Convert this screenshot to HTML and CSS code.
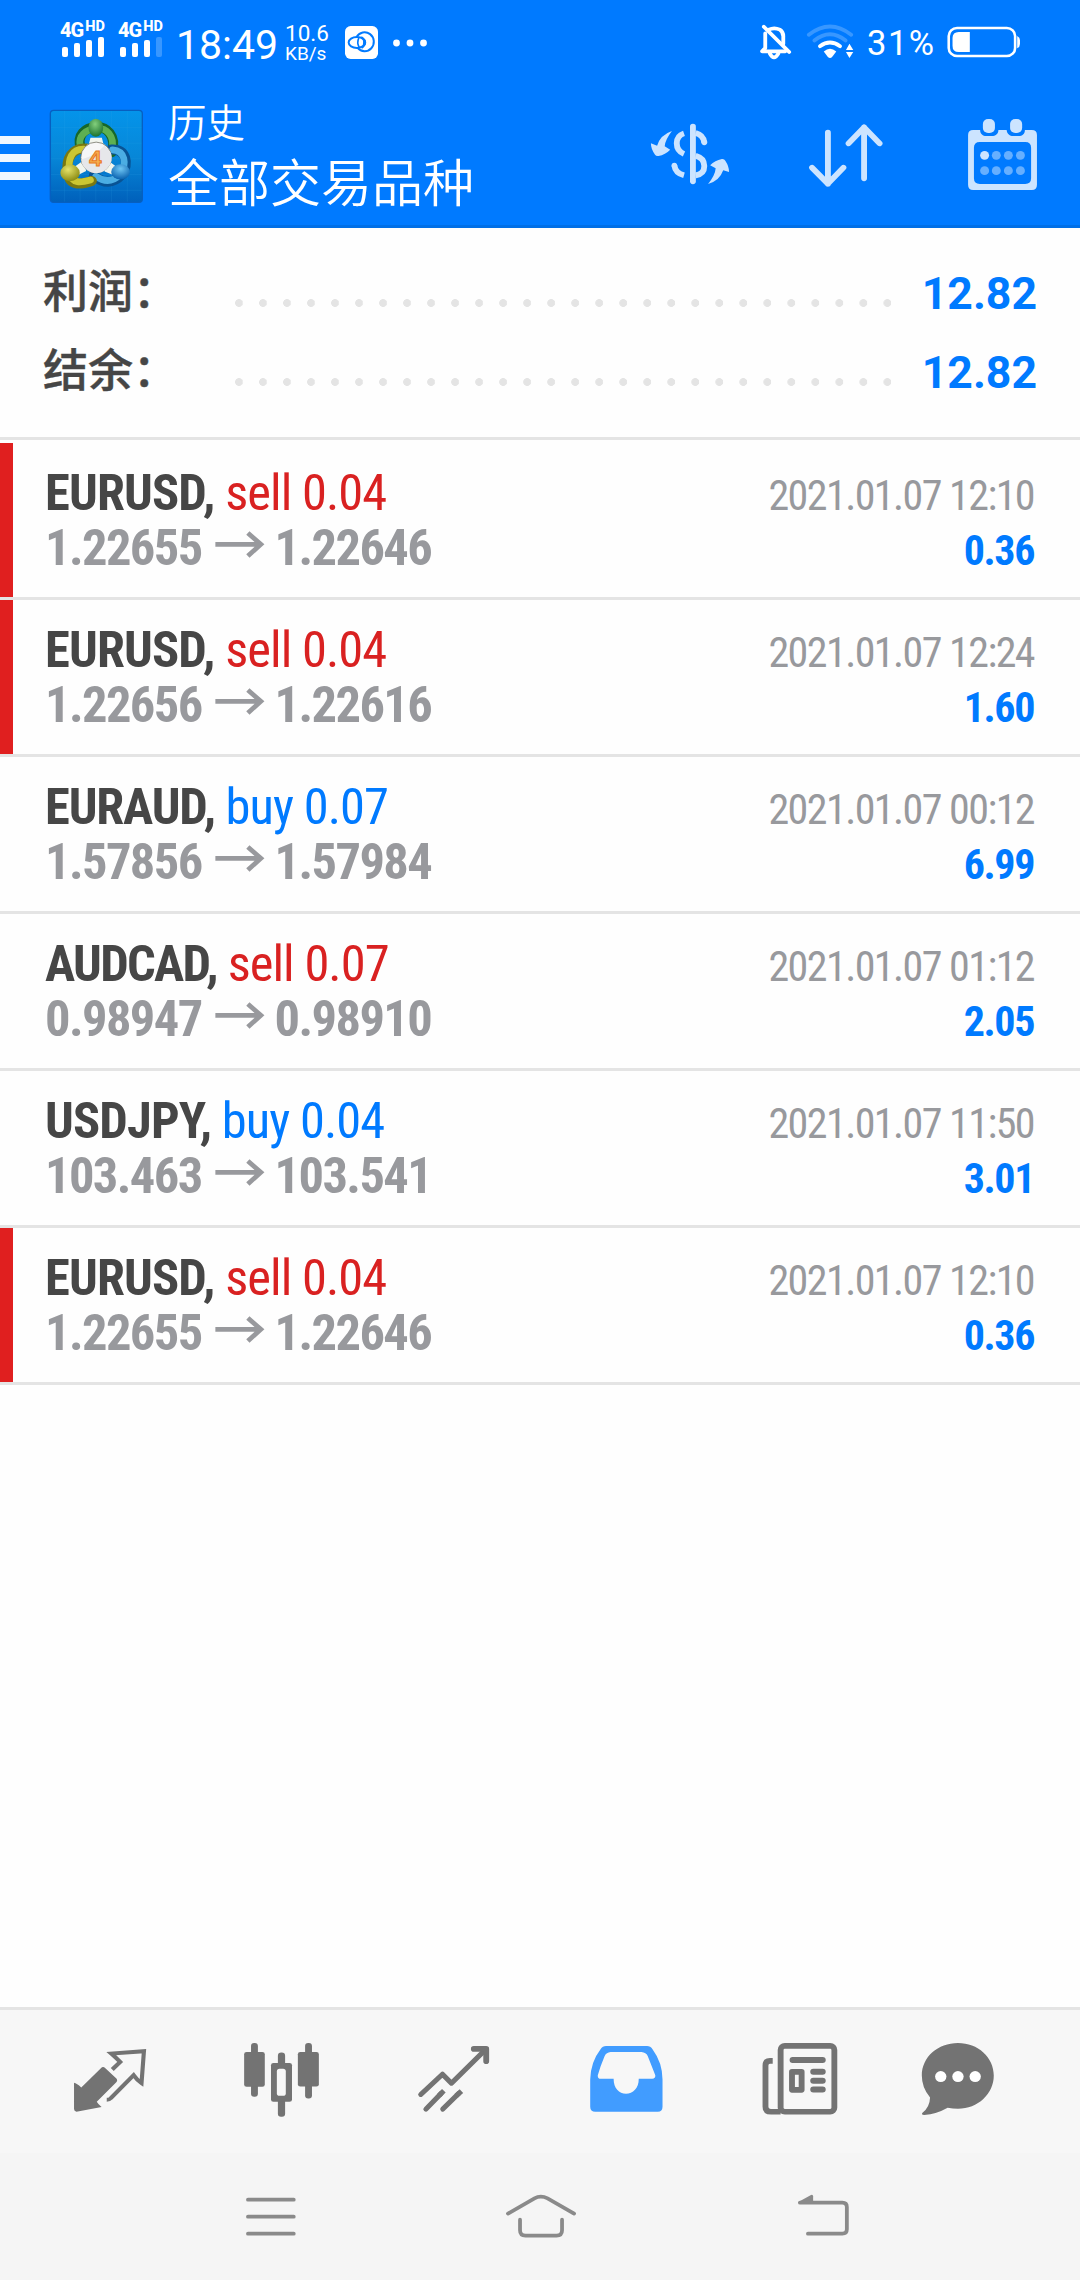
FILE: index.html
```html
<!DOCTYPE html>
<html lang="zh-CN">
<head>
<meta charset="utf-8">
<title>历史</title>
<link rel="stylesheet" href="styles.css">
</head>
<body>
<header class="top">
  <div class="status">
    <div class="signal">
      <div class="net">4G<sup>HD</sup></div>
      <div class="bars"><i class="b1"></i><i class="b2"></i><i class="b3"></i><i class="b4"></i></div>
    </div>
    <div class="signal">
      <div class="net">4G<sup>HD</sup></div>
      <div class="bars"><i class="b1"></i><i class="b2"></i><i class="b3"></i><i class="b4 off"></i></div>
    </div>
    <div class="clock">18:49</div>
    <div class="speed"><span>10.6</span><span class="unit">KB/s</span></div>
    <svg class="app" viewBox="15 33 100 98" preserveAspectRatio="none">
      <rect x="15" y="33" width="100" height="98" rx="17" fill="#fff"/>
      <g fill="none" stroke="#007aff" stroke-width="6">
        <path d="M50 66A28 28 0 1 1 53 98"/>
        <ellipse cx="51" cy="82" rx="25" ry="16"/>
        <path d="M57 68Q50 82 58 96" stroke-width="5"/>
      </g>
      <path d="M65 65Q90 82 66 99Q78 82 65 65Z" fill="#007aff" stroke="#007aff" stroke-width="3"/>
    </svg>
    <svg class="more" viewBox="0 0 36 8"><g fill="#fff"><circle cx="4.500" cy="4" r="3.400"/><circle cx="18" cy="4" r="3.400"/><circle cx="31.500" cy="4" r="3.400"/></g></svg>
    <svg class="bell" viewBox="636 70 98 114" preserveAspectRatio="none">
      <g fill="none" stroke="#fff" stroke-width="11" stroke-linecap="round" stroke-linejoin="round">
        <path d="M654 101V145L645 155H712M664 90Q680 82 696 90Q707 97 706 113V133"/>
        <path d="M667 161Q679 185 692 161"/>
        <path d="M650 81L723 157"/>
      </g>
    </svg>
    <svg class="wifi" viewBox="770 70 144 110" preserveAspectRatio="none">
      <g fill="none" stroke="#fff" stroke-width="11" stroke-linecap="round">
        <path d="M781 105Q842 56 903 105" opacity=".22"/>
        <path d="M797 122Q842 85 887 122" opacity=".22"/>
        <path d="M813 139Q842 117 871 139"/>
      </g>
      <path d="M824 155Q842 138 860 155L848 171Q842 177 836 171Z" fill="#fff"/>
      <path d="M898 132L909 150H888ZM898 174L909 156H888Z" fill="#fff"/>
    </svg>
    <div class="percent">31%</div>
    <svg class="battery" viewBox="1183 78 214 96" preserveAspectRatio="none">
      <rect x="1188" y="84" width="192" height="84" rx="24" fill="none" stroke="#fff" stroke-width="7.500"/>
      <path d="M1249 96V156H1217Q1199 156 1199 138V114Q1199 96 1217 96Z" fill="#fff"/>
      <path d="M1386 108Q1394 112 1394 120V132Q1394 141 1386 145Z" fill="#fff"/>
    </svg>
  </div>
  <div class="toolbar">
    <div class="burger"><i></i><i></i><i></i></div>
    <svg class="logo" viewBox="26 41 284 284">
      <defs>
        <linearGradient id="sky" x1="0" y1="0" x2="0" y2="1"><stop offset="0" stop-color="#0494ea"/><stop offset=".5" stop-color="#0787d8"/><stop offset="1" stop-color="#0060bb"/></linearGradient>
        <radialGradient id="green" cx=".45" cy=".3" r=".7"><stop offset="0" stop-color="#83cf7c"/><stop offset="1" stop-color="#1c7230"/></radialGradient>
        <radialGradient id="gold" cx=".4" cy=".3" r=".75"><stop offset="0" stop-color="#e6e36a"/><stop offset="1" stop-color="#86860e"/></radialGradient>
        <radialGradient id="blue" cx=".5" cy=".3" r=".7"><stop offset="0" stop-color="#6fc6f4"/><stop offset="1" stop-color="#0860ae"/></radialGradient>
      </defs>
      <rect x="30" y="45" width="275" height="275" rx="10" fill="url(#sky)" stroke="#075fc0" stroke-width="4"/>
      <path d="M72 47V318M119 47V318M166 47V318M213 47V318M260 47V318M32 96H303M32 143H303M32 190H303M32 237H303M32 284H303" stroke="#3aabea" stroke-opacity=".2" stroke-width="2"/>
      <g fill="none" stroke-linecap="round">
        <path d="M121 158C108 118 135 97 166 95S229 120 214 170" stroke="#17672b" stroke-width="30"/>
        <path d="M119 150C113 122 135 103 166 99S224 122 214 162" stroke="#5db052" stroke-width="20"/>
        <path d="M212 162C258 160 266 204 243 238Q205 278 160 240" stroke="#095394" stroke-width="30"/>
        <path d="M216 163C254 166 260 204 239 237Q205 270 166 242" stroke="#4bade3" stroke-width="20"/>
        <path d="M138 159C94 156 76 190 82 232S125 266 154 256" stroke="#797812" stroke-width="30"/>
        <path d="M130 161C94 160 82 190 87 229S125 260 150 253" stroke="#cbc632" stroke-width="20"/>
      </g>
      <path d="M150 127H184L190 150H144ZM96 218L130 194L137 226L110 240ZM202 194L236 220L222 240L192 228Z" fill="#f1f5ee"/>
      <ellipse cx="166" cy="97" rx="22" ry="27" fill="url(#green)"/>
      <ellipse cx="89" cy="232" rx="29" ry="25" fill="url(#gold)"/>
      <ellipse cx="240" cy="229" rx="28" ry="23" fill="url(#blue)"/>
      <circle cx="167" cy="186" r="46" fill="#f7f7f7" stroke="#5c5c4d" stroke-width="2"/>
      <path d="M122 192Q165 181 192 150L211 172A46 46 0 0 1 150 229Q125 218 122 192Z" fill="#e6e7ea"/>
      <text class="four" x="165" y="212" text-anchor="middle">4</text>
    </svg>
    <div class="titles"><div class="sub">历史</div><div class="main">全部交易品种</div></div>
    <svg class="act" viewBox="209 264 453 411" preserveAspectRatio="none">
      <g fill="none" stroke="#cce4ff" stroke-width="17">
        <path d="M444 380V544" stroke-linecap="round"/>
        <path d="M418 400Q397 407 397 430T418 462M390 496Q393 519 418 526"/>
        <path d="M452 399Q474 405 477 427M452 467Q477 474 477 498T452 526"/>
      </g>
      <path d="M383 393Q363 420 362 439L378 449Q364 464 344 468Q337 469 334 464Q322 448 322 430L340 437Q349 405 383 393Z" fill="#cce4ff"/>
      <path d="M488 552Q509 525 510 505L494 496Q508 481 528 477Q535 476 538 482Q549 499 549 516L532 511Q521 543 488 552Z" fill="#cce4ff"/>
      <circle cx="477" cy="427" r="8.500" fill="#cce4ff"/><circle cx="390" cy="496" r="8" fill="#cce4ff"/>
    </svg>
    <svg class="act" viewBox="662 264 453 411" preserveAspectRatio="none">
      <g fill="none" stroke="#cce4ff" stroke-width="17" stroke-linecap="round" stroke-linejoin="round">
        <path d="M836 398V551M790 503L836 551L881 503"/>
        <path d="M941 535V382M896 430L941 382L986 430"/>
      </g>
    </svg>
    <svg class="act" viewBox="1115 264 453 411" preserveAspectRatio="none">
      <path fill="#cce4ff" fill-rule="evenodd" d="M1258 390H1278C1278 403 1287 408 1295 408H1312C1322 408 1331 402 1331 390H1355C1356 403 1365 408 1373 408H1390C1400 408 1408 402 1408 390H1428Q1443 390 1443 405V554Q1443 570 1428 570H1258Q1243 570 1243 554V405Q1243 390 1258 390ZM1277 426Q1260 426 1260 443V535Q1260 552 1277 552H1409Q1426 552 1426 535V443Q1426 426 1409 426Z"/>
      <rect x="1286" y="357" width="35" height="42" rx="15" fill="#cce4ff"/><rect x="1365" y="357" width="35" height="42" rx="15" fill="#cce4ff"/>
      <circle cx="1291" cy="466" r="13" fill="#cce4ff"/>
      <g fill="#66afff"><circle cx="1325" cy="466" r="13"/><circle cx="1360" cy="466" r="13"/><circle cx="1395" cy="466" r="13"/><circle cx="1291" cy="512" r="13"/><circle cx="1325" cy="512" r="13"/><circle cx="1360" cy="512" r="13"/><circle cx="1395" cy="512" r="13"/></g>
    </svg>
  </div>
</header>

<section class="summary">
  <div class="sumrow"><span class="label">利润：</span><span class="dots"></span><span class="total">12.82</span></div>
  <div class="sumrow"><span class="label">结余：</span><span class="dots"></span><span class="total">12.82</span></div>
</section>

<svg class="defs" width="0" height="0"><symbol id="arrow" viewBox="620 900 152 87" preserveAspectRatio="none"><path d="M624 943H756M719 909L757 943L719 978" fill="none" stroke="#98999d" stroke-width="14"/></symbol></svg>

<main class="deals">
  <article class="deal marked">
    <div class="line"><span><b class="sym">EURUSD,</b> <span class="sell">sell 0.04</span></span><span class="date">2021.01.07 12:10</span></div>
    <div class="line"><span class="price">1.22655<svg class="arrow"><use href="#arrow"/></svg>1.22646</span><b class="profit">0.36</b></div>
  </article>
  <article class="deal marked">
    <div class="line"><span><b class="sym">EURUSD,</b> <span class="sell">sell 0.04</span></span><span class="date">2021.01.07 12:24</span></div>
    <div class="line"><span class="price">1.22656<svg class="arrow"><use href="#arrow"/></svg>1.22616</span><b class="profit">1.60</b></div>
  </article>
  <article class="deal">
    <div class="line"><span><b class="sym tight">EURAUD,</b> <span class="buy">buy 0.07</span></span><span class="date">2021.01.07 00:12</span></div>
    <div class="line"><span class="price">1.57856<svg class="arrow"><use href="#arrow"/></svg>1.57984</span><b class="profit">6.99</b></div>
  </article>
  <article class="deal">
    <div class="line"><span><b class="sym tighter">AUDCAD,</b> <span class="sell">sell 0.07</span></span><span class="date">2021.01.07 01:12</span></div>
    <div class="line"><span class="price">0.98947<svg class="arrow"><use href="#arrow"/></svg>0.98910</span><b class="profit">2.05</b></div>
  </article>
  <article class="deal">
    <div class="line"><span><b class="sym">USDJPY,</b> <span class="buy">buy 0.04</span></span><span class="date">2021.01.07 11:50</span></div>
    <div class="line"><span class="price">103.463<svg class="arrow"><use href="#arrow"/></svg>103.541</span><b class="profit">3.01</b></div>
  </article>
  <article class="deal marked">
    <div class="line"><span><b class="sym">EURUSD,</b> <span class="sell">sell 0.04</span></span><span class="date">2021.01.07 12:10</span></div>
    <div class="line"><span class="price">1.22655<svg class="arrow"><use href="#arrow"/></svg>1.22646</span><b class="profit">0.36</b></div>
  </article>
</main>

<nav class="tabs">
  <svg viewBox="69.7 60 499.5 430" preserveAspectRatio="none">
    <path d="M215 279Q223 281 236 293L293 235Q299 228 306 235L338 266Q343 272 337 278L281 336Q284 342 295 352L222 366Q215 365 215 358Z" fill="#737373"/>
    <path d="M310 330Q318 330 322 325L388 256Q398 271 411 280L418 184L323 191Q337 204 349 216L326 239" fill="none" stroke="#737373" stroke-width="12"/>
  </svg>
  <svg viewBox="569.2 60 499.5 430" preserveAspectRatio="none">
    <g fill="#737373">
      <rect x="729" y="159" width="20" height="162" rx="9"/><rect x="709" y="186" width="60" height="105" rx="7"/>
      <rect x="886" y="159" width="20" height="167" rx="9"/><rect x="865" y="186" width="61" height="104" rx="7"/>
      <rect x="807" y="188" width="21" height="50" rx="10"/><rect x="807" y="325" width="21" height="56" rx="9"/>
      <rect x="787" y="219" width="61" height="117" rx="7"/>
    </g>
    <rect x="804" y="237" width="26" height="81" rx="8" fill="#f7f7f7"/>
  </svg>
  <svg viewBox="1068.7 60 499.5 430" preserveAspectRatio="none">
    <g fill="none" stroke="#737373" stroke-width="15" stroke-linecap="round" stroke-linejoin="round">
      <path d="M1222 314L1285 253L1311 280L1408 181"/>
      <path d="M1376 177H1412V214" stroke-width="17"/>
      <path d="M1237 358L1281 311M1286 358L1332 311"/>
      <path d="M1275 317L1289 303M1325 318L1340 304" stroke-linecap="butt"/>
    </g>
  </svg>
  <svg viewBox="0.2 60 499.5 430" preserveAspectRatio="none">
    <path fill="#419cff" fill-rule="evenodd" d="M192 168H311Q321 168 327 178Q356 219 356 269V351Q356 366 342 366H161Q146 366 146 351V269Q147 217 176 178Q182 168 192 168ZM205 186Q193 187 188 198Q176 227 168 256Q167 267 177 267H214C214 296 230 312 250 312S287 296 287 267H326Q336 266 335 256L313 198Q308 187 295 186Z"/>
  </svg>
  <svg viewBox="499.7 60 499.5 430" preserveAspectRatio="none">
    <g fill="none" stroke="#737373" stroke-width="17">
      <rect x="699" y="168" width="156" height="198" rx="12"/>
      <path d="M676 213H668Q655 213 655 227V350Q655 366 671 366H699"/>
    </g>
    <path d="M734 210H821M794 246H821M794 273H821M794 299H821" fill="none" stroke="#737373" stroke-width="18" stroke-linecap="round"/>
    <rect x="732" y="246" width="28" height="54" fill="none" stroke="#737373" stroke-width="17" stroke-linejoin="round"/>
  </svg>
  <svg viewBox="999.2 60 499.5 430" preserveAspectRatio="none">
    <path d="M1133 323Q1109 294 1109 257C1109 201 1156 159 1214 159S1318 202 1318 257S1272 357 1214 357Q1199 357 1184 354Q1152 373 1116 376Q1106 375 1111 369Q1132 352 1133 323Z" fill="#737373"/>
    <circle cx="1164" cy="260" r="16.500" fill="#fff"/><circle cx="1214" cy="260" r="16.500" fill="#fff"/><circle cx="1264" cy="260" r="16.500" fill="#fff"/>
  </svg>
</nav>
<nav class="system">
  <svg viewBox="392 490 784 381" preserveAspectRatio="none"><path d="M720 630H853M720 681H853M720 732H853"/></svg>
  <svg viewBox="1176 490 784 381" preserveAspectRatio="none"><path d="M1475 672L1552 626Q1570 616 1590 626L1667 672M1510 690V722Q1510 738 1526 738H1616Q1632 738 1632 722V690"/></svg>
  <svg viewBox="392 490 784 381" preserveAspectRatio="none"><path d="M755 639H878Q891 639 891 652V719Q891 732 878 732H778"/><path class="tip" d="M750 637L787 616Q793 614 793 620V642H754Q747 641 750 637Z"/></svg>
</nav>
</body>
</html>
```
FILE: styles.css
```css
* { box-sizing: border-box; }
body {
  margin: 0;
  width: 1080px;
  height: 2280px;
  display: flex;
  flex-direction: column;
  background: #fefefe;
  font-family: Roboto, "Noto Sans CJK SC", sans-serif;
  white-space: nowrap;
  overflow: hidden;
}
svg { display: block; flex: none; }
.defs { display: none; }

.top {
  height: 228px;
  background: #007aff;
  border-bottom: 3px solid #006fe6;
  color: #fff;
}

.status { display: flex; height: 88px; align-items: flex-start; padding-left: 60px; }
.status > div { flex: none; }
.signal { width: 58px; padding-top: 21px; }
.net { display: flex; height: 16px; font-size: 20px; line-height: 19px; font-weight: 800; letter-spacing: -1px; }
.net sup { font-size: 14.5px; line-height: 12px; letter-spacing: 0; margin-left: 2px; }
.bars { display: flex; align-items: flex-end; gap: 6px; height: 20px; padding-left: 2px; }
.bars i { width: 6px; border-radius: 2px; background: #fff; }
.b1 { height: 10px; }
.b2 { height: 14px; }
.b3 { height: 17px; }
.b4 { height: 20px; }
.bars .off { opacity: .22; }
.clock { width: 109px; padding-top: 21px; font-size: 41px; line-height: 48px; }
.speed { display: flex; flex-direction: column; width: 60px; padding-top: 22px; font-size: 22.5px; line-height: 22px; }
.unit { font-size: 19px; line-height: 20px; }
.app { width: 33px; height: 33px; margin-top: 26px; }
.more { width: 36px; height: 8px; margin: 39px 0 0 14px; }
.bell { width: 34px; height: 38px; margin: 23px 0 0 331px; }
.wifi { width: 50px; height: 37px; margin: 23px 0 0 12px; }
.percent { width: 80px; padding: 22px 0 0 12px; font-size: 34.5px; line-height: 42px; letter-spacing: 1.5px; }
.battery { width: 74px; height: 32px; margin: 26px 0 0 12px; }

.toolbar { display: flex; height: 137px; }
.burger { display: flex; flex-direction: column; gap: 10px; width: 30px; padding-top: 48px; }
.burger i { height: 8px; background: #f0f7ff; }
.logo { width: 95px; height: 95px; margin: 21px 0 0 19px; }
.four { font: 700 66px "Liberation Sans", sans-serif; fill: #f6b04f; stroke: #e87722; stroke-width: 3px; }
.titles { width: 468px; padding: 4px 0 0 24px; font-family: "Noto Sans CJK SC", sans-serif; font-weight: 350; }
.sub { font-size: 38.5px; line-height: 56px; }
.main { font-size: 51px; line-height: 64px; }
.act { width: 156px; height: 137px; }

.summary { height: 212px; padding: 24px 43px 0 43px; border-bottom: 3px solid #e4e4e4; }
.sumrow { display: flex; height: 79px; align-items: center; }
.label { width: 192px; font: 500 45px/79px "Noto Sans CJK SC", sans-serif; color: #464646; -webkit-text-stroke: .4px #464646; padding-bottom: 6px; }
.dots { width: 656px; height: 8px; margin-top: 22px; background: radial-gradient(circle at 4px 4px, #e4e4e4 3.6px, transparent 4.2px) 0 0 / 24.02px 8px repeat-x; }
.total { flex: 1; text-align: right; font-size: 44.6px; font-weight: 700; color: #007aff; padding-top: 5px; }

.deals { flex: 1; padding-top: 3px; font-family: "Roboto Condensed", Roboto, sans-serif; font-stretch: 75%; }
.deal { height: 157px; padding: 22px 46px 0 45px; border-bottom: 3px solid #e4e4e4; }
.marked { box-shadow: inset 13px 0 #e01f1f; }
.line { display: flex; justify-content: space-between; align-items: baseline; height: 55px; font-size: 50.5px; line-height: 55px; letter-spacing: -.95px; }
.sym { color: #464646; letter-spacing: -.85px; }
.tight { letter-spacing: -1.15px; }
.tighter { letter-spacing: -1.7px; }
.sell { color: #d92121; }
.buy { color: #007aff; }
.date { font-size: 42px; color: #98999d; letter-spacing: -1.55px; }
.price { font-weight: 700; color: #98999d; letter-spacing: -1.6px; }
.profit { font-size: 42px; color: #007aff; letter-spacing: -1.4px; }
.arrow { display: inline-block; width: 52px; height: 29px; margin: 0 9px 0 12px; vertical-align: 6px; }

.tabs { display: flex; height: 146px; padding: 0 24px; background: #f7f7f7; border-top: 3px solid #e4e4e4; }
.tabs svg { width: 172px; height: 143px; }
.system { display: flex; height: 127px; padding: 0 135px; background: #f5f5f5; }
.system svg { width: 270px; height: 127px; fill: none; stroke: #8a8a8a; stroke-width: 11px; stroke-linecap: round; }
.system .tip { fill: #8a8a8a; stroke: none; }
```
